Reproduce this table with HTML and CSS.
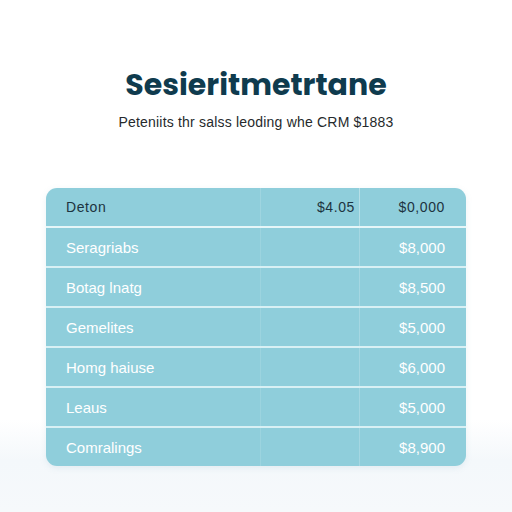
FILE: index.html
```html
<!DOCTYPE html>
<html>
<head>
<meta charset="utf-8">
<link rel="stylesheet" href="styles.css">
</head>
<body>
<div class="page">
  <h1 class="title">Sesieritmetrtane</h1>
  <p class="subtitle">Peteniits thr salss leoding whe CRM $1883</p>
  <div class="table">
    <div class="row head">
      <span class="name">Deton</span>
      <span class="mid">$4.05</span>
      <span class="val">$0,000</span>
    </div>
    <div class="row"><span class="name">Seragriabs</span><span class="mid"></span><span class="val">$8,000</span></div>
    <div class="row"><span class="name">Botag lnatg</span><span class="mid"></span><span class="val">$8,500</span></div>
    <div class="row"><span class="name">Gemelites</span><span class="mid"></span><span class="val">$5,000</span></div>
    <div class="row"><span class="name">Homg haiuse</span><span class="mid"></span><span class="val">$6,000</span></div>
    <div class="row"><span class="name">Leaus</span><span class="mid"></span><span class="val">$5,000</span></div>
    <div class="row last"><span class="name">Comralings</span><span class="mid"></span><span class="val">$8,900</span></div>
  </div>
</div>
</body>
</html>
```
FILE: styles.css
```css
html, body {
  margin: 0;
  padding: 0;
}
body {
  width: 512px;
  height: 512px;
  background: linear-gradient(to bottom, #ffffff 0%, #ffffff 82%, #f4f8fb 90%, #f6f9fb 100%);
  font-family: "Liberation Sans", Arial, sans-serif;
  overflow: hidden;
}
.page {
  display: flex;
  flex-direction: column;
  align-items: center;
  padding-top: 65px;
}
.title {
  margin: 0;
  font-family: "Poppins", "Open Sans", sans-serif;
  font-weight: 700;
  font-size: 30px;
  line-height: 40px;
  color: #0f3b4e;
  letter-spacing: 0;
}
.subtitle {
  margin: 9px 0 0;
  font-size: 14px;
  line-height: 16px;
  color: #262a2c;
  letter-spacing: 0.2px;
}
.table {
  margin-top: 58px;
  width: 420px;
  background: #8fcedb;
  border-radius: 11px;
  overflow: hidden;
  box-shadow: 0 2px 6px rgba(120, 170, 185, 0.15);
}
.row {
  display: grid;
  grid-template-columns: 1fr 100px 106px;
  height: 38px;
  align-items: center;
  border-bottom: 2px solid #d8f0f4;
  color: #ffffff;
  font-size: 15px;
}
.row.last {
  border-bottom: none;
}
.row.head {
  color: #1d3340;
  font-size: 14px;
  letter-spacing: 0.6px;
  border-bottom-color: #e6f6f8;
}
.name {
  padding-left: 20px;
}
.mid {
  height: 100%;
  border-left: 1px solid rgba(255,255,255,0.12);
  border-right: 1px solid rgba(255,255,255,0.2);
  display: flex;
  align-items: center;
  justify-content: flex-end;
  padding-right: 4px;
}
.row.head .mid {
  border-left: 1px solid rgba(255,255,255,0.15);
  border-right: 1px solid rgba(255,255,255,0.35);
}
.val {
  text-align: right;
  padding-right: 21px;
}
```
